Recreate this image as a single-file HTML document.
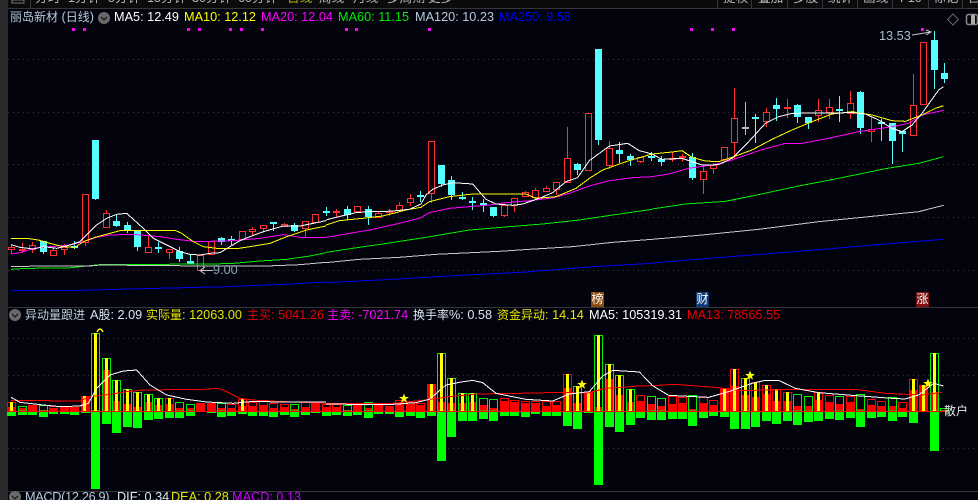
<!DOCTYPE html>
<html lang="zh"><head><meta charset="utf-8"><title>丽岛新材</title>
<style>
html,body{margin:0;padding:0;background:#02030d}
#p{position:relative;width:978px;height:500px;overflow:hidden;background:#02030d;font-family:"Liberation Sans","Noto Sans CJK SC",sans-serif;font-size:12.7px;line-height:16px}
#p span{position:absolute;white-space:nowrap}
#p span i{font-style:normal;font-size:12px}
svg{position:absolute;left:0;top:0}
.t{top:-10px;color:#b4b4b4}
.m{top:9px}
.v{top:307px}
.d{top:489px}
.b{top:292px;width:13px;height:15px;color:#fff;font-size:12px;line-height:15px;text-align:center}
</style></head><body><div id="p">
<svg width="978" height="500" viewBox="0 0 978 500">
<rect x="0" y="0" width="8" height="500" fill="#2a2a2c"/>
<rect x="8" y="0" width="970" height="8" fill="#0b0b0e"/>
<g shape-rendering="crispEdges" fill="none">
<path d="M8 8.5H978M8 307.5H978M8 491.5H978" stroke="#34363a"/>
<path d="M30.5 0V8M717.5 0V8M751.5 0V8M787.5 0V8M822.5 0V8M857.5 0V8M892.5 0V8M928.5 0V8M962.5 0V8" stroke="#34363a"/>
<path d="M8 59.5H978M8 112.5H978M8 164.5H978M8 217.5H978M8 270.5H978M8 338.5H978M8 375.5H978M8 448.5H978" stroke="#3c3c3c" stroke-dasharray="1 4"/>
<path d="M12 0h12v3h-12z" stroke="#777"/>
</g>
<path fill="#f0f" shape-rendering="crispEdges" d="M72 28h3v3h-3zM83 28h3v3h-3zM187 28h3v3h-3zM198 28h3v3h-3zM229 28h3v3h-3zM240 28h3v3h-3zM261 28h3v3h-3zM345 28h3v3h-3zM355 28h3v3h-3zM428 28h3v3h-3zM690 28h3v3h-3zM711 28h3v3h-3zM732 28h3v3h-3zM921 28h3v3h-3z"/>

<!-- candles -->
<g shape-rendering="crispEdges">
<path fill="none" stroke="#ff3232" d="M11.5 245V254M22.5 243V253M32.5 242V253M53.5 246V256M64.5 244V255M85.5 242V246M106.5 210V228M148.5 235V253M169.5 249V259M200.5 270V271M252.5 227V235M263.5 228V233M284.5 223V226M305.5 221V237M336.5 209V217M357.5 211V213M378.5 211V217M389.5 209V216M399.5 202V205M410.5 194V206M431.5 193V203M504.5 215V217M514.5 205V212M525.5 191V197M535.5 188V190M546.5 186V192M556.5 189V195M567.5 127V158M609.5 141V169M640.5 161V163M672.5 152V162M682.5 154V162M703.5 166V194M713.5 163V174M724.5 159V161M734.5 88V159M766.5 108V127M787.5 99V118M818.5 99V122M829.5 99V119M850.5 91V119M871.5 117V142M913.5 74V105"/>
<path fill="none" stroke="#55ffff" d="M43.5 252V254M74.5 241V249M95.5 199V200M116.5 215V227M127.5 222V233M137.5 247V251M158.5 242V253M179.5 247V262M190.5 254V261M221.5 237V245M231.5 236V245M273.5 224V231M294.5 223V232M326.5 207V216M347.5 206V220M368.5 206V225M420.5 191V202M441.5 184V187M451.5 176V200M462.5 192V200M472.5 197V210M483.5 199V212M493.5 216V217M577.5 163V175M598.5 140V145M619.5 142V163M630.5 154V166M651.5 152V161M661.5 156V166M692.5 153V180M755.5 114V143M776.5 98V121M797.5 104V123M808.5 123V129M839.5 96V122M860.5 91V134M881.5 119V141M892.5 141V164M902.5 134V152M934.5 31V89M944.5 63V83"/>
<path fill="none" stroke="#bbb" d="M745.5 102V135"/>
<path fill="#bbb" d="M742 127h7v2h-7z"/>
<path fill="#55ffff" d="M40 241h7v11h-7zM71 246h7v2h-7zM92 140h7v59h-7zM113 221h7v5h-7zM124 225h7v6h-7zM134 231h7v16h-7zM155 247h7v2h-7zM176 251h7v8h-7zM187 261h7v3h-7zM218 238h7v4h-7zM228 239h7v2h-7zM270 222h7v2h-7zM291 225h7v6h-7zM323 211h7v2h-7zM344 209h7v6h-7zM365 209h7v8h-7zM417 195h7v2h-7zM438 165h7v19h-7zM448 180h7v15h-7zM459 197h7v2h-7zM469 201h7v2h-7zM480 203h7v2h-7zM490 207h7v9h-7zM574 164h7v6h-7zM595 49h7v91h-7zM616 150h7v4h-7zM627 156h7v4h-7zM648 156h7v2h-7zM658 159h7v3h-7zM689 157h7v21h-7zM752 117h7v2h-7zM773 105h7v4h-7zM794 105h7v12h-7zM805 117h7v6h-7zM836 109h7v2h-7zM857 92h7v36h-7zM878 122h7v2h-7zM889 123h7v18h-7zM899 131h7v3h-7zM931 40h7v30h-7zM941 73h7v6h-7z"/>
<path fill="#02030d" stroke="#ff3232" d="M8.5 247.5h6v2h-6zM29.5 245.5h6v4h-6zM50.5 250.5h6v5h-6zM61.5 247.5h6v2h-6zM82.5 194.5h6v48h-6zM103.5 213.5h6v14h-6zM145.5 247.5h6v5h-6zM166.5 249.5h6v3h-6zM197.5 255.5h6v15h-6zM208.5 241.5h6v13h-6zM239.5 231.5h6v8h-6zM249.5 229.5h6v2h-6zM260.5 225.5h6v3h-6zM281.5 224.5h6v2h-6zM302.5 221.5h6v7h-6zM312.5 214.5h6v8h-6zM354.5 206.5h6v5h-6zM375.5 213.5h6v4h-6zM396.5 205.5h6v5h-6zM407.5 198.5h6v4h-6zM428.5 141.5h6v52h-6zM501.5 205.5h6v10h-6zM511.5 198.5h6v7h-6zM522.5 192.5h6v4h-6zM532.5 190.5h6v7h-6zM543.5 188.5h6v3h-6zM553.5 182.5h6v7h-6zM564.5 158.5h6v24h-6zM585.5 113.5h6v57h-6zM606.5 148.5h6v17h-6zM637.5 157.5h6v4h-6zM700.5 171.5h6v8h-6zM710.5 165.5h6v3h-6zM721.5 147.5h6v12h-6zM731.5 118.5h6v24h-6zM763.5 112.5h6v9h-6zM815.5 110.5h6v5h-6zM826.5 107.5h6v5h-6zM847.5 103.5h6v10h-6zM868.5 129.5h6v2h-6zM910.5 105.5h6v30h-6zM920.5 42.5h6v62h-6z"/>
<path fill="#ff3232" d="M19 249h7v2h-7zM333 211h7v2h-7zM386 211h7v2h-7zM669 158h7v2h-7zM679 156h7v2h-7zM784 107h7v2h-7z"/>
</g>

<!-- MA lines, coordinates in 3x crop space -->
<g fill="none" stroke-linejoin="round" vector-effect="non-scaling-stroke" shape-rendering="crispEdges">
<g transform="translate(0 130) scale(.33333)">
<polyline vector-effect="non-scaling-stroke" stroke="#0000ee" points="33,482 240,481 430,476 680,470 850,463 978,456"/>
<polyline vector-effect="non-scaling-stroke" stroke="#00ee00" points="33,418 80,415 205,414 240,410 300,404 640,402 700,400 780,393 860,388 930,378 978,368"/>
<polyline vector-effect="non-scaling-stroke" stroke="#c8c8c8" points="33,409 270,408 300,405 620,408 800,408 900,404 978,397"/>
<polyline vector-effect="non-scaling-stroke" stroke="#f0f" points="33,372 60,368 100,355 150,350 210,345 250,335 290,322 330,315 400,313 480,320 530,328 590,335 700,332 780,325 850,314 900,322 978,322"/>
<polyline vector-effect="non-scaling-stroke" stroke="#ff0" points="33,325 80,325 115,330 150,340 190,350 225,352 250,335 285,322 330,310 360,302 525,301 545,310 580,335 610,350 650,355 710,356 750,350 810,340 860,320 920,300 978,288"/>
<polyline vector-effect="non-scaling-stroke" stroke="#fff" points="33,344 60,352 100,357 130,350 170,355 210,345 240,335 270,305 290,285 320,265 350,253 380,250 400,268 430,295 460,325 500,345 540,365 570,373 600,375 630,370 660,368 690,350 720,332 750,320 790,305 850,288 900,288 940,280 978,272"/>
</g>
<g transform="translate(326 130) scale(.33333)">
<polyline vector-effect="non-scaling-stroke" stroke="#0000ee" points="0,458 200,448 400,436 600,426 800,410 978,400"/>
<polyline vector-effect="non-scaling-stroke" stroke="#00ee00" points="0,367 80,355 170,342 300,322 430,300 550,290 650,282 760,270 860,255 978,238"/>
<polyline vector-effect="non-scaling-stroke" stroke="#c8c8c8" points="0,398 100,388 220,382 330,373 520,364 610,358 740,350 860,337 978,328"/>
<polyline vector-effect="non-scaling-stroke" stroke="#f0f" points="0,322 60,312 140,298 220,280 280,265 310,248 370,235 430,230 490,225 540,218 610,212 680,204 730,190 790,168 850,152 920,143 978,140"/>
<polyline vector-effect="non-scaling-stroke" stroke="#ff0" points="0,285 40,272 110,265 170,258 240,240 285,232 310,215 370,200 440,192 600,192 630,205 690,200 750,175 790,145 830,120 900,95 978,72"/>
<polyline vector-effect="non-scaling-stroke" stroke="#fff" points="0,270 30,262 60,255 90,248 130,245 170,245 210,242 250,238 285,222 300,195 320,178 350,165 380,158 440,162 460,185 480,208 510,222 560,226 590,222 640,205 680,188 720,155 755,143 790,92 850,48 905,40 940,62 978,72"/>
</g>
<g transform="translate(652 80) scale(.33333)">
<polyline vector-effect="non-scaling-stroke" stroke="#0000ee" points="0,549 260,528 515,508 700,492 875,478"/>
<polyline vector-effect="non-scaling-stroke" stroke="#00ee00" points="0,387 100,372 220,364 300,348 440,318 560,295 700,266 800,250 875,230"/>
<polyline vector-effect="non-scaling-stroke" stroke="#c8c8c8" points="0,478 150,465 320,448 500,425 650,410 800,395 875,376"/>
<polyline vector-effect="non-scaling-stroke" stroke="#f0f" points="0,290 50,282 110,265 180,255 240,240 320,212 400,190 450,190 530,175 620,155 720,140 770,130 810,105 875,91"/>
<polyline vector-effect="non-scaling-stroke" stroke="#ff0" points="0,222 60,216 90,212 120,232 160,243 200,245 240,232 300,210 360,178 420,150 480,125 540,102 600,95 660,105 720,122 760,124 810,105 850,85 875,77"/>
<polyline vector-effect="non-scaling-stroke" stroke="#fff" points="0,222 30,238 90,235 120,245 150,255 200,254 240,235 290,185 340,130 380,110 420,100 600,98 640,102 680,120 720,145 750,155 780,135 810,100 860,30 875,20"/>
</g>
</g>

<!-- annotations -->
<path d="M912 35L931 32M926 30L931 32L926 35" fill="none" stroke="#c8c8c8"/>
<path d="M213 270.5H201M205 267L200 270.5L205 274" fill="none" stroke="#c8c8c8"/>
<path d="M953 14l5.500 5.500l-5.500 5.500l-5.500-5.500z" fill="none" stroke="#666"/>
<rect x="966.500" y="14.500" width="11" height="10" rx="2" fill="none" stroke="#888" stroke-width="1.500"/>
<rect x="971" y="15" width="4" height="9" fill="#aaa"/>
<circle cx="104" cy="18" r="6" fill="#6a6a6a"/><path d="M101 17l3 3l3-3" fill="none" stroke="#1c1c1c" stroke-width="1.300"/>
<circle cx="15" cy="315" r="6" fill="#6a6a6a"/><path d="M12 314l3 3l3-3" fill="none" stroke="#1c1c1c" stroke-width="1.300"/>
<circle cx="15" cy="497" r="6" fill="#6a6a6a"/><path d="M12 496l3 3l3-3" fill="none" stroke="#1c1c1c" stroke-width="1.300"/>

<!-- volume panel -->
<g shape-rendering="crispEdges">
<path fill="#00ff00" d="M7 412h9v4h-9zM18 412h9v3h-9zM28 412h9v3h-9zM39 412h9v5h-9zM49 412h9v2h-9zM60 412h9v2h-9zM70 412h9v3h-9zM81 412h9v1h-9zM91 412h9v77h-9zM102 412h9v12h-9zM112 412h9v21h-9zM123 412h9v15h-9zM133 412h9v16h-9zM144 412h9v8h-9zM154 412h9v7h-9zM165 412h9v6h-9zM175 412h9v6h-9zM186 412h9v4h-9zM207 412h9v1h-9zM217 412h9v5h-9zM227 412h9v4h-9zM238 412h9v2h-9zM248 412h9v4h-9zM259 412h9v4h-9zM269 412h9v5h-9zM280 412h9v3h-9zM290 412h9v5h-9zM301 412h9v3h-9zM311 412h9v1h-9zM322 412h9v4h-9zM332 412h9v3h-9zM343 412h9v4h-9zM353 412h9v3h-9zM364 412h9v6h-9zM374 412h9v2h-9zM385 412h9v2h-9zM395 412h9v5h-9zM406 412h9v4h-9zM416 412h9v6h-9zM427 412h9v4h-9zM437 412h9v49h-9zM447 412h9v25h-9zM458 412h9v9h-9zM468 412h9v9h-9zM479 412h9v7h-9zM489 412h9v9h-9zM500 412h9v4h-9zM510 412h9v4h-9zM521 412h9v5h-9zM531 412h9v2h-9zM542 412h9v4h-9zM552 412h9v4h-9zM563 412h9v14h-9zM573 412h9v17h-9zM584 412h9v1h-9zM594 412h9v73h-9zM605 412h9v15h-9zM615 412h9v20h-9zM626 412h9v13h-9zM636 412h9v6h-9zM647 412h9v8h-9zM657 412h9v8h-9zM668 412h9v7h-9zM678 412h9v7h-9zM688 412h9v14h-9zM699 412h9v6h-9zM709 412h9v4h-9zM720 412h9v5h-9zM730 412h9v17h-9zM741 412h9v17h-9zM751 412h9v15h-9zM762 412h9v9h-9zM772 412h9v12h-9zM783 412h9v9h-9zM793 412h9v13h-9zM804 412h9v10h-9zM814 412h9v9h-9zM825 412h9v7h-9zM835 412h9v8h-9zM846 412h9v6h-9zM856 412h9v15h-9zM867 412h9v6h-9zM877 412h9v5h-9zM888 412h9v9h-9zM898 412h9v5h-9zM909 412h9v11h-9zM930 412h9v39h-9z"/>
<path fill="#ff0000" d="M7 407h9v4h-9zM18 408h9v3h-9zM28 405h9v6h-9zM39 410h9v1h-9zM49 408h9v3h-9zM60 407h9v4h-9zM70 407h9v4h-9zM81 396h9v15h-9zM91 410h9v1h-9zM102 370h9v41h-9zM112 401h9v10h-9zM123 404h9v7h-9zM133 407h9v4h-9zM144 402h9v9h-9zM154 405h9v6h-9zM165 404h9v7h-9zM175 408h9v3h-9zM186 408h9v3h-9zM196 403h9v8h-9zM207 403h9v8h-9zM217 408h9v3h-9zM227 408h9v3h-9zM238 406h9v5h-9zM248 406h9v5h-9zM259 405h9v6h-9zM269 408h9v3h-9zM280 407h9v4h-9zM290 409h9v2h-9zM301 407h9v4h-9zM311 403h9v8h-9zM322 407h9v4h-9zM332 407h9v4h-9zM343 410h9v1h-9zM353 405h9v6h-9zM364 408h9v3h-9zM374 404h9v7h-9zM385 407h9v4h-9zM395 403h9v8h-9zM406 404h9v7h-9zM416 405h9v6h-9zM427 384h9v27h-9zM437 402h9v9h-9zM447 403h9v8h-9zM458 403h9v8h-9zM468 402h9v9h-9zM479 405h9v6h-9zM489 408h9v3h-9zM500 401h9v10h-9zM510 402h9v9h-9zM521 403h9v8h-9zM531 403h9v8h-9zM542 406h9v5h-9zM552 405h9v6h-9zM563 388h9v23h-9zM573 403h9v8h-9zM584 392h9v19h-9zM594 407h9v4h-9zM605 379h9v32h-9zM615 395h9v16h-9zM626 402h9v9h-9zM636 401h9v10h-9zM647 404h9v7h-9zM657 406h9v5h-9zM668 404h9v7h-9zM678 403h9v8h-9zM688 409h9v2h-9zM699 403h9v8h-9zM709 405h9v6h-9zM720 388h9v23h-9zM730 386h9v25h-9zM741 395h9v16h-9zM751 397h9v14h-9zM762 394h9v17h-9zM772 401h9v10h-9zM783 401h9v10h-9zM793 406h9v5h-9zM804 406h9v5h-9zM814 400h9v11h-9zM825 402h9v9h-9zM835 404h9v7h-9zM846 402h9v9h-9zM856 409h9v2h-9zM867 405h9v6h-9zM877 406h9v5h-9zM888 406h9v5h-9zM898 408h9v3h-9zM909 390h9v21h-9zM919 385h9v26h-9zM930 392h9v19h-9zM940 410h9v1h-9z"/>
<path fill="none" stroke="#ff0000" d="M7.500 402.500h8V411h-8zM49.500 406.500h8V411h-8zM165.500 398.500h8V411h-8zM227.500 404.500h8V411h-8zM238.500 399.500h8V411h-8zM248.500 402.500h8V411h-8zM259.500 400.500h8V411h-8zM269.500 403.500h8V411h-8zM280.500 404.500h8V411h-8zM301.500 402.500h8V411h-8zM322.500 404.500h8V411h-8zM332.500 404.500h8V411h-8zM385.500 406.500h8V411h-8zM395.500 400.500h8V411h-8zM406.500 402.500h8V411h-8zM416.500 403.500h8V411h-8zM500.500 398.500h8V411h-8zM510.500 400.500h8V411h-8zM521.500 401.500h8V411h-8zM531.500 401.500h8V411h-8zM542.500 401.500h8V411h-8zM552.500 401.500h8V411h-8zM563.500 374.500h8V411h-8zM636.500 395.500h8V411h-8zM668.500 396.500h8V411h-8zM678.500 397.500h8V411h-8zM699.500 397.500h8V411h-8zM709.500 400.500h8V411h-8zM730.500 369.500h8V411h-8zM751.500 382.500h8V411h-8zM762.500 385.500h8V411h-8zM772.500 389.500h8V411h-8zM783.500 392.500h8V411h-8zM814.500 392.500h8V411h-8zM825.500 395.500h8V411h-8zM846.500 396.500h8V411h-8zM867.500 399.500h8V411h-8zM877.500 401.500h8V411h-8zM898.500 402.500h8V411h-8zM909.500 379.500h8V411h-8z"/>
<path fill="none" stroke="#00ee00" d="M18.500 406.500h8V411h-8zM39.500 405.500h8V411h-8zM91.500 333.500h8V411h-8zM102.500 358.500h8V411h-8zM112.500 380.500h8V411h-8zM123.500 389.500h8V411h-8zM133.500 392.500h8V411h-8zM144.500 394.500h8V411h-8zM154.500 398.500h8V411h-8zM175.500 402.500h8V411h-8zM186.500 404.500h8V411h-8zM217.500 403.500h8V411h-8zM290.500 404.500h8V411h-8zM343.500 405.500h8V411h-8zM364.500 402.500h8V411h-8zM437.500 353.500h8V411h-8zM447.500 378.500h8V411h-8zM458.500 393.500h8V411h-8zM468.500 393.500h8V411h-8zM479.500 398.500h8V411h-8zM489.500 399.500h8V411h-8zM573.500 386.500h8V411h-8zM594.500 335.500h8V411h-8zM605.500 364.500h8V411h-8zM615.500 375.500h8V411h-8zM626.500 389.500h8V411h-8zM647.500 396.500h8V411h-8zM657.500 398.500h8V411h-8zM688.500 395.500h8V411h-8zM741.500 378.500h8V411h-8zM793.500 394.500h8V411h-8zM804.500 396.500h8V411h-8zM835.500 396.500h8V411h-8zM856.500 394.500h8V411h-8zM888.500 397.500h8V411h-8zM930.500 353.500h8V411h-8zM940.500 408.500h8V411h-8z"/>
<path fill="#ffff00" d="M10 402h3v9h-3zM83 396h3v15h-3zM94 333h3v78h-3zM105 358h3v53h-3zM115 380h3v31h-3zM126 389h3v22h-3zM136 392h3v19h-3zM147 394h3v17h-3zM157 398h3v13h-3zM168 398h3v13h-3zM241 399h3v12h-3zM430 384h3v27h-3zM440 353h3v58h-3zM450 378h3v33h-3zM461 393h3v18h-3zM471 393h3v18h-3zM566 374h3v37h-3zM576 386h3v25h-3zM587 392h3v19h-3zM597 335h3v76h-3zM608 364h3v47h-3zM618 375h3v36h-3zM629 389h3v22h-3zM723 388h3v23h-3zM733 369h3v42h-3zM744 378h3v33h-3zM754 382h3v29h-3zM765 385h3v26h-3zM775 389h3v22h-3zM786 392h3v19h-3zM817 392h3v19h-3zM912 379h3v32h-3zM922 385h3v26h-3zM933 353h3v58h-3z"/>
<path d="M8 411.500H945" stroke="#ff0000"/>
</g>
<g fill="none" shape-rendering="crispEdges">
<g transform="translate(0 300) scale(.33333)">
<polyline vector-effect="non-scaling-stroke" stroke="#ff0000" points="33,301 145,301 150,303 240,303 270,290 330,283 380,275 430,270 490,270 500,268 610,268 650,265 670,270 720,295 780,302 978,310"/>
<polyline vector-effect="non-scaling-stroke" stroke="#fff" points="33,292 60,307 130,315 180,320 240,318 265,310 290,265 330,225 370,213 410,210 450,255 500,285 560,298 620,306 700,310 750,305 978,306"/>
</g>
<g transform="translate(326 300) scale(.33333)">
<polyline vector-effect="non-scaling-stroke" stroke="#ff0000" points="0,310 200,310 300,300 370,290 450,282 580,280 710,277 780,280 840,265 940,258 978,257"/>
<polyline vector-effect="non-scaling-stroke" stroke="#fff" points="0,312 80,313 200,313 270,308 310,298 360,255 400,247 440,241 470,248 510,280 600,298 680,303 730,282 790,275 830,228 860,211 940,216 978,255"/>
</g>
<g transform="translate(652 300) scale(.33333)">
<polyline vector-effect="non-scaling-stroke" stroke="#ff0000" points="0,257 70,253 200,263 260,272 430,268 610,268 700,280 810,285 870,277"/>
<polyline vector-effect="non-scaling-stroke" stroke="#fff" points="0,256 50,286 170,292 230,275 300,250 340,241 380,241 430,265 500,278 600,286 720,295 760,297 800,285 845,250 875,258"/>
</g>
</g>
<path d="M97 332Q100 326 103 332" fill="none" stroke="#ff0" stroke-width="1.500"/>
<g fill="#ffff00">
<polygon transform="translate(404 398.500)" points="0,-5 1.300,-1.600 4.900,-1.500 2,.7 3,4.200 0,2.100 -3,4.200 -2,.7 -4.900,-1.500 -1.300,-1.600"/>
<polygon transform="translate(582 384.500)" points="0,-5 1.300,-1.600 4.900,-1.500 2,.7 3,4.200 0,2.100 -3,4.200 -2,.7 -4.900,-1.500 -1.300,-1.600"/>
<polygon transform="translate(750 375.500)" points="0,-5 1.300,-1.600 4.900,-1.500 2,.7 3,4.200 0,2.100 -3,4.200 -2,.7 -4.900,-1.500 -1.300,-1.600"/>
<polygon transform="translate(928 383.500)" points="0,-5 1.300,-1.600 4.900,-1.500 2,.7 3,4.200 0,2.100 -3,4.200 -2,.7 -4.900,-1.500 -1.300,-1.600"/>
</g>
</svg>

<span class="t" style="left:35px">分时</span><span class="t" style="left:68px">1分钟</span><span class="t" style="left:108px">5分钟</span><span class="t" style="left:147px">15分钟</span><span class="t" style="left:192px">30分钟</span><span class="t" style="left:238px">60分钟</span><span class="t" style="left:287px;color:#b8b800">日线</span><span class="t" style="left:319px">周线</span><span class="t" style="left:353px">月线</span><span class="t" style="left:387px">多周期</span><span class="t" style="left:428px">更多</span>
<span class="t" style="left:723px">提权</span><span class="t" style="left:758px">叠加</span><span class="t" style="left:793px">多股</span><span class="t" style="left:828px">统计</span><span class="t" style="left:863px">画线</span><span class="t" style="left:900px">F10</span><span class="t" style="left:933px">标记</span><span class="t" style="left:968px">自</span>

<span class="m" style="left:10px;color:#b7cbd8"><i>丽岛新材</i> (<i>日线</i>)</span>
<span class="m" style="left:114px;color:#fff">MA5: 12.49</span>
<span class="m" style="left:184px;color:#ffff00">MA10: 12.12</span>
<span class="m" style="left:261px;color:#ff00ff">MA20: 12.04</span>
<span class="m" style="left:338px;color:#00ee00">MA60: 11.15</span>
<span class="m" style="left:415px;color:#b7cbd8">MA120: 10.23</span>
<span class="m" style="left:499px;color:#0000ee">MA250: 9.58</span>
<span style="left:879px;top:28px;color:#a9c0d0">13.53</span>
<span style="left:213px;top:262px;color:#8fa6b8">9.00</span>

<span class="b" style="left:591px;background:#8a4a10">榜</span>
<span class="b" style="left:696px;background:#0c3a78">财</span>
<span class="b" style="left:916px;background:#801010">涨</span>

<span class="v" style="left:25px;color:#b7cbd8"><i>异动量跟进</i></span>
<span class="v" style="left:90px;color:#d8e6f0">A<i>股</i>: 2.09</span>
<span class="v" style="left:146px;color:#e6e600"><i>实际量</i>: 12063.00</span>
<span class="v" style="left:247px;color:#e60000"><i>主买</i>: 5041.26</span>
<span class="v" style="left:327px;color:#ff00ff"><i>主卖</i>: -7021.74</span>
<span class="v" style="left:413px;color:#d8e6f0"><i>换手率</i>%: 0.58</span>
<span class="v" style="left:497px;color:#e6e600"><i>资金异动</i>: 14.14</span>
<span class="v" style="left:589px;color:#fff">MA5: 105319.31</span>
<span class="v" style="left:687px;color:#e60000">MA13: 78565.55</span>
<span style="left:944px;top:403px;color:#e8e8e8"><i>散户</i></span>

<span class="d" style="left:25px;color:#b7cbd8;letter-spacing:-.3px">MACD(12,26,9)</span>
<span class="d" style="left:117px;color:#d8e6f0">DIF: 0.34</span>
<span class="d" style="left:171px;color:#e6e600">DEA: 0.28</span>
<span class="d" style="left:232px;color:#d000ff">MACD: 0.13</span>
</div></body></html>
